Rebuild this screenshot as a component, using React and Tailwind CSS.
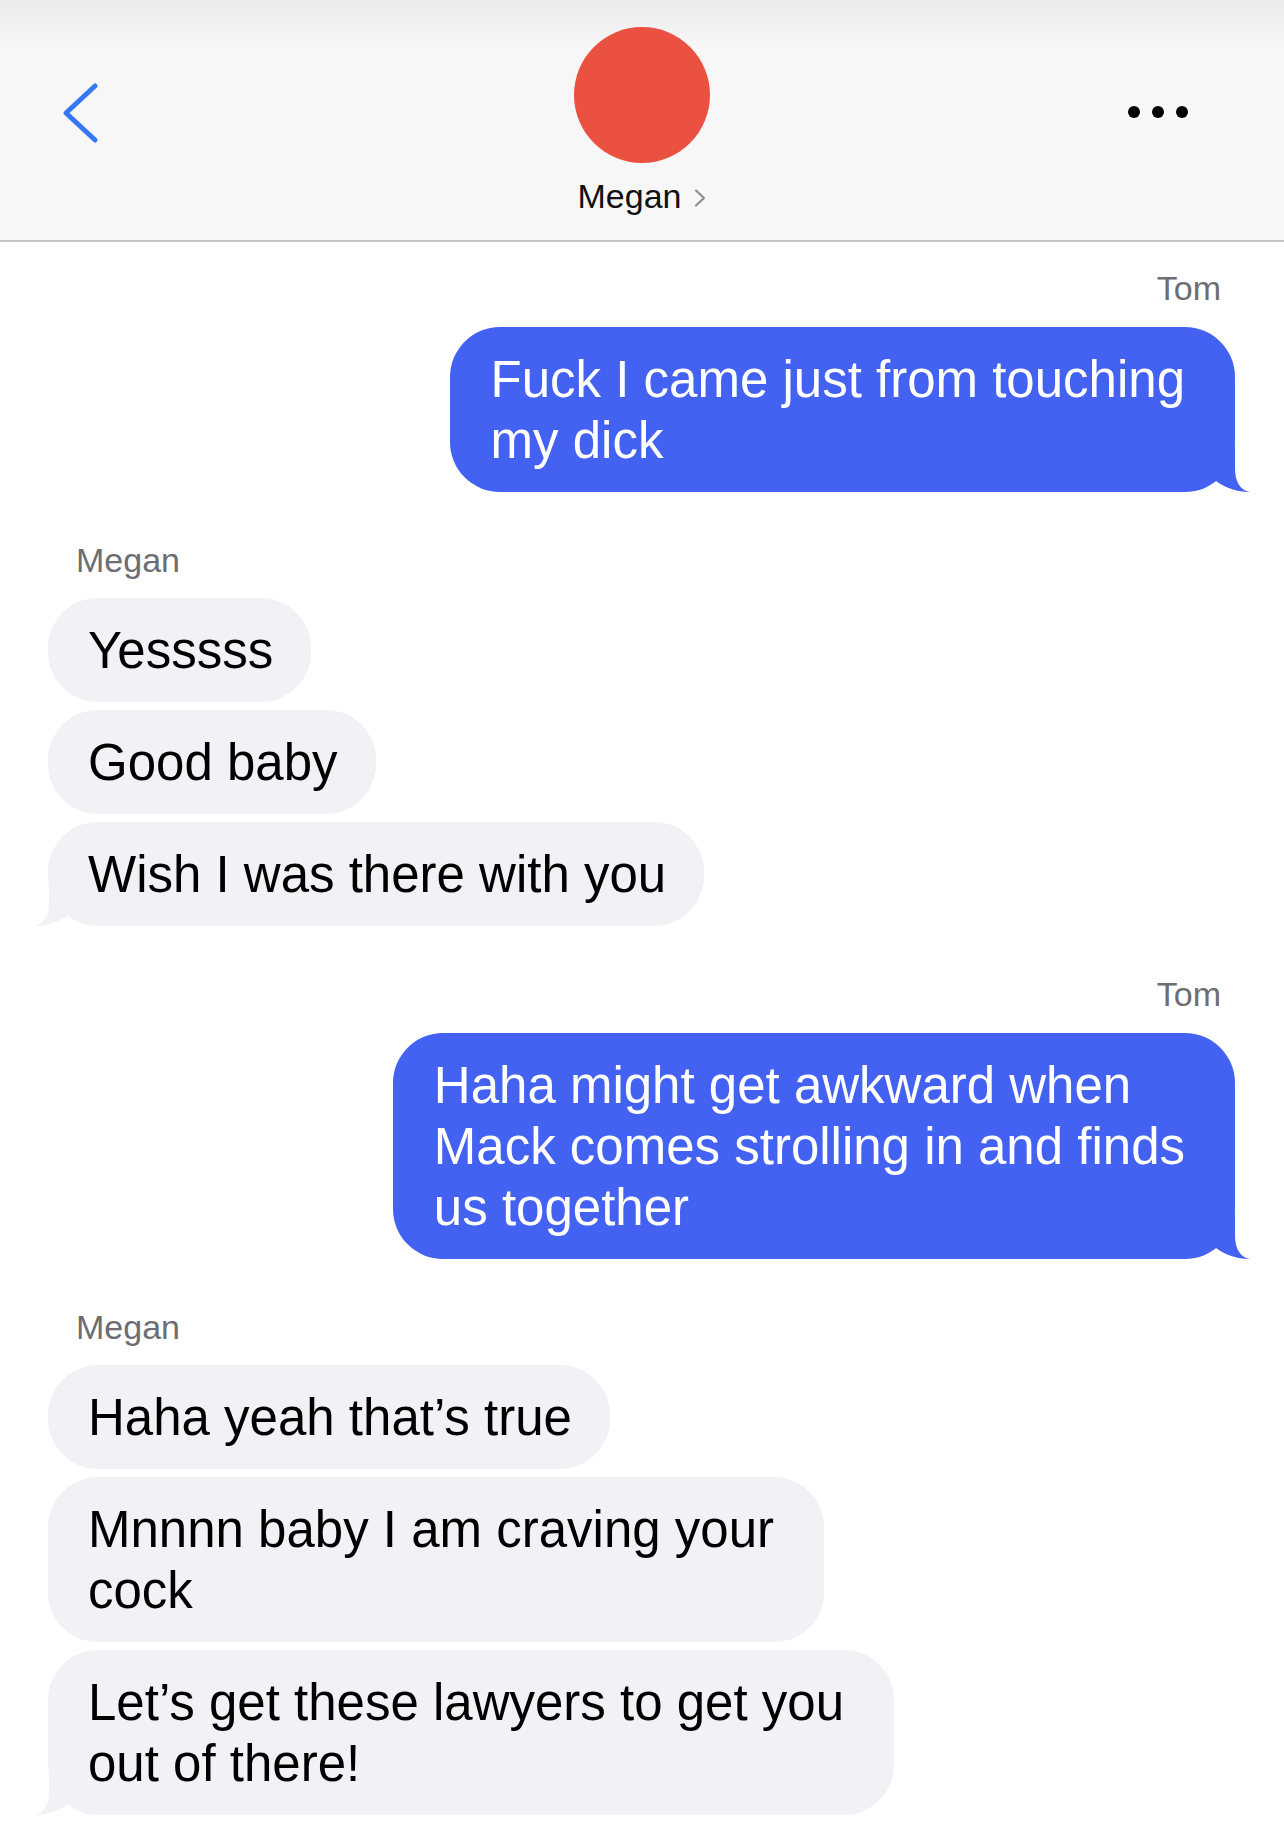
import React from "react";

// chat transcript; each message is a list of lines so bubbles hug the longest line
const thread = [
    {
        from: "Tom",
        sent: true,
        messages: [["Fuck I came just from touching", "my dick"]],
    },
    {
        from: "Megan",
        sent: false,
        messages: [["Yesssss"], ["Good baby"], ["Wish I was there with you"]],
    },
    {
        from: "Tom",
        sent: true,
        messages: [["Haha might get awkward when", "Mack comes strolling in and finds", "us together"]],
    },
    {
        from: "Megan",
        sent: false,
        messages: [
            ["Haha yeah that\u2019s true"],
            ["Mnnnn baby I am craving your", "cock"],
            ["Let\u2019s get these lawyers to get you", "out of there!"],
        ],
    },
];

const Tail = ({ sent }) => (
    <svg
        width="40"
        height="46"
        viewBox="0 0 40 46"
        className={
            sent
                ? "absolute bottom-0 right-[-15px]"
                : "absolute bottom-0 left-[-14px] -scale-x-100"
        }
    >
        <path
            d="M0 0 H25 V22 C25 36 30 44 40 46 C30 46 16 43 6 35 Z"
            fill={sent ? "#4462f2" : "#f1f1f6"}
        />
    </svg>
);

const Bubble = ({ lines, sent, tail }) => {
    const multi = lines.length > 1;
    let pad = "pl-[40px] pr-[38px]";
    if (sent) pad = "pl-[41px] pr-[50px]";
    else if (multi) pad = "pl-[40px] pr-[50px]";
    return (
        <div
            className={
                (sent ? "bg-[#4462f2] text-white " : "bg-[#f1f1f6] text-black ") +
                "relative w-fit rounded-[50px] pt-[22px] pb-[21px] " +
                pad
            }
        >
            {tail && <Tail sent={sent} />}
            <p className="relative text-[51px] leading-[61px] whitespace-nowrap">
                {lines.map((l, i) => (
                    <React.Fragment key={i}>
                        {i > 0 && <br />}
                        {l}
                    </React.Fragment>
                ))}
            </p>
        </div>
    );
};

export default function App() {
    return (
        <div className="w-[1284px] h-[1835px] overflow-hidden bg-white font-['Liberation_Sans',Arial,sans-serif]">
            {/* header */}
            <div className="h-[242px] grid grid-cols-3 border-b-2 border-[#c6c6c8] bg-linear-to-b from-[#ebebeb] to-[#f7f7f7] to-20%">
                <div className="pl-[60px] pt-[82px]">
                    <svg width="42" height="62" viewBox="0 0 42 62" fill="none">
                        <path
                            d="M35 4 L6 31 L35 58"
                            stroke="#3478f6"
                            strokeWidth="5"
                            strokeLinecap="round"
                            strokeLinejoin="round"
                        />
                    </svg>
                </div>
                <div className="flex flex-col items-center pt-[27px]">
                    <div className="w-[136px] h-[136px] rounded-full bg-[#ea5140]" />
                    <div className="mt-[13px] flex items-center gap-[13px]">
                        <span className="text-[34px] leading-[40px] text-[#111]">Megan</span>
                        <svg width="12" height="20" viewBox="0 0 12 20" fill="none" className="mt-[3px]">
                            <path
                                d="M2 2.5 L10 10 L2 17.5"
                                stroke="#8e8e93"
                                strokeWidth="2.2"
                                strokeLinecap="round"
                                strokeLinejoin="round"
                            />
                        </svg>
                    </div>
                </div>
                <div className="flex justify-end gap-[12px] pr-[96px] pt-[106px]">
                    <span className="w-[12px] h-[12px] rounded-full bg-black" />
                    <span className="w-[12px] h-[12px] rounded-full bg-black" />
                    <span className="w-[12px] h-[12px] rounded-full bg-black" />
                </div>
            </div>

            {/* messages */}
            <div className="pt-[26px] pl-[48px] pr-[49px] flex flex-col">
                {thread.map((g, gi) => (
                    <div
                        key={gi}
                        className={
                            (gi > 0 ? "mt-[48px] " : "") +
                            (g.sent ? "flex flex-col items-end" : "flex flex-col items-start")
                        }
                    >
                        <p
                            className={
                                g.sent
                                    ? "text-[34px] leading-[40px] text-[#6d6d72] pr-[14px] mb-[19px]"
                                    : "text-[34px] leading-[40px] text-[#6d6d72] pl-[28px] mb-[18px]"
                            }
                        >
                            {g.from}
                        </p>
                        <div className={g.sent ? "flex flex-col items-end gap-[8px]" : "flex flex-col items-start gap-[8px]"}>
                            {g.messages.map((m, mi) => (
                                <Bubble
                                    key={mi}
                                    lines={m}
                                    sent={g.sent}
                                    tail={mi === g.messages.length - 1}
                                />
                            ))}
                        </div>
                    </div>
                ))}
            </div>
        </div>
    );
}
